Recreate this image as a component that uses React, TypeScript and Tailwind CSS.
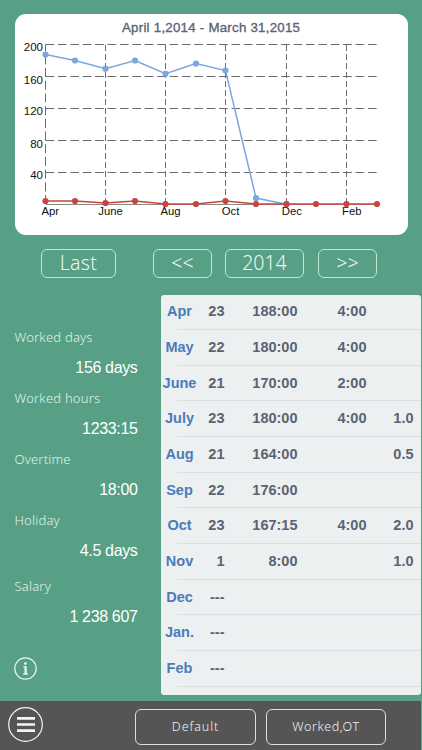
import type { ReactNode } from 'react';
import { clsx } from 'clsx';

interface MonthRow {
  month: string;
  days: string;
  hours?: string;
  overtime?: string;
  holiday?: string;
}

const MONTHS: MonthRow[] = [
  { month: 'Apr', days: '23', hours: '188:00', overtime: '4:00' },
  { month: 'May', days: '22', hours: '180:00', overtime: '4:00' },
  { month: 'June', days: '21', hours: '170:00', overtime: '2:00' },
  { month: 'July', days: '23', hours: '180:00', overtime: '4:00', holiday: '1.0' },
  { month: 'Aug', days: '21', hours: '164:00', holiday: '0.5' },
  { month: 'Sep', days: '22', hours: '176:00' },
  { month: 'Oct', days: '23', hours: '167:15', overtime: '4:00', holiday: '2.0' },
  { month: 'Nov', days: '1', hours: '8:00', holiday: '1.0' },
  { month: 'Dec', days: '---' },
  { month: 'Jan.', days: '---' },
  { month: 'Feb', days: '---' },
];

const SUMMARY = [
  { label: 'Worked days', value: '156 days', height: 'h-[61px]' },
  { label: 'Worked hours', value: '1233:15', height: 'h-[61px]' },
  { label: 'Overtime', value: '18:00', height: 'h-[61px]' },
  { label: 'Holiday', value: '4.5 days', height: 'h-[66px]' },
  { label: 'Salary', value: '1 238 607', height: 'h-[66px]' },
];

/* Chart geometry, in card coordinates. */
const POINT_X = [30.5, 60, 90.5, 120, 150.5, 181, 210.5, 241, 271.5, 301, 331.5, 362];
const WORKED_Y = [40.5, 46.5, 54.7, 46.5, 59.8, 49.6, 56.6, 184, 190.2];
const OVERTIME_Y = [187, 187, 189, 187, 190, 190, 187, 190, 190, 190, 190, 190];
const GRID_Y = [
  { y: 30.5, label: '200', textY: 36.5 },
  { y: 62.5, label: '160', textY: 69.5 },
  { y: 94.5, label: '120', textY: 101 },
  { y: 126.5, label: '80', textY: 133.5 },
  { y: 158.5, label: '40', textY: 165 },
];
const GRID_X = [
  { x: 30.5, label: 'Apr', textX: 35.3 },
  { x: 90.5, label: 'June', textX: 95.5 },
  { x: 150.5, label: 'Aug', textX: 155.5 },
  { x: 210.5, label: 'Oct', textX: 215.5 },
  { x: 271.5, label: 'Dec', textX: 276.8 },
  { x: 331.5, label: 'Feb', textX: 336.8 },
];

const toPoints = (ys: number[]) => ys.map((y, i) => `${POINT_X[i]},${y}`).join(' ');

function Series({ ys, color }: { ys: number[]; color: string }) {
  return (
    <g fill={color}>
      <polyline points={toPoints(ys)} fill="none" stroke={color} strokeWidth="1.5" />
      {ys.map((y, i) => (
        <circle key={i} cx={POINT_X[i]} cy={y} r="3.1" />
      ))}
    </g>
  );
}

function Chart() {
  return (
    <section className="mx-[14.5px] h-[221px] rounded-[11px] bg-white">
      <svg width="393" height="221" viewBox="0 0 393 221" className="block font-['Liberation_Sans',sans-serif]">
        <text x="196" y="18" textAnchor="middle" fontSize="13.3" fill="#5d6474" stroke="#5d6474" strokeWidth="0.35" textLength="178">
          April 1,2014 - March 31,2015
        </text>
        <g stroke="#6b6b6b" strokeWidth="1">
          {GRID_Y.map(({ y }) => (
            <line key={y} x1="30.5" x2="362" y1={y} y2={y} strokeDasharray="8.7 3.7" />
          ))}
          {GRID_X.map(({ x }, i) => (
            <line key={x} x1={x} x2={x} y1="190" y2="30.5" strokeDasharray={i === 0 ? '9 3.7' : '6 3'} />
          ))}
          <line x1="30.5" x2="362" y1="190.5" y2="190.5" stroke="#8d8a80" />
        </g>
        <Series ys={WORKED_Y} color="#7aa8dc" />
        <Series ys={OVERTIME_Y} color="#c8453f" />
        <g fontSize="11.5" fill="#111">
          {GRID_Y.map(({ label, textY }) => (
            <text key={label} x="28" y={textY} textAnchor="end">{label}</text>
          ))}
        </g>
        <g fontSize="11.3" fill="#111">
          {GRID_X.map(({ label, textX }) => (
            <text key={label} x={textX} y="201" textAnchor="middle">{label}</text>
          ))}
        </g>
      </svg>
    </section>
  );
}

function OutlineButton({ className, children }: { className?: string; children: ReactNode }) {
  return (
    <button
      type="button"
      className={clsx(
        "flex shrink-0 items-center justify-center border font-['Noto_Sans',sans-serif] font-light whitespace-nowrap",
        className,
      )}
    >
      {children}
    </button>
  );
}

function Summary() {
  return (
    <dl className="flex w-[161px] flex-col pt-[34px] pr-[23.5px] pl-[14.5px]">
      {SUMMARY.map(({ label, value, height }) => (
        <div key={label} className={clsx('shrink-0', height)}>
          <dt className="font-['Noto_Sans',sans-serif] text-[13px] leading-[16px] font-light tracking-[0.2px] text-[#e0f1ea]">
            {label}
          </dt>
          <dd className="mt-[14px] text-right text-base leading-[18px] tracking-[-0.35px] text-white">{value}</dd>
        </div>
      ))}
    </dl>
  );
}

function MonthTable() {
  return (
    <div className="h-[400px] w-[259.5px] overflow-hidden rounded-[3px] bg-[#ecf0f1] text-[14.5px] font-bold text-[#5b6373]">
      {MONTHS.map(({ month, days, hours, overtime, holiday }) => (
        <div key={month} className="flex h-[35.65px] flex-col">
          <div className="flex flex-1 items-center pt-px">
            <span className="w-[37px] shrink-0 text-center text-[#4a7db8]">{month}</span>
            <span className="w-[26.5px] shrink-0 text-right">{days}</span>
            <span className="w-[73px] shrink-0 text-right">{hours}</span>
            <span className="w-[69px] shrink-0 text-right">{overtime}</span>
            <span className="w-[47px] shrink-0 text-right">{holiday}</span>
          </div>
          <div className="ml-4 h-px bg-[#dcdfe2]" />
        </div>
      ))}
    </div>
  );
}

export default function App() {
  return (
    <main className="flex h-[750px] w-[422px] flex-col overflow-hidden bg-[#57a085] pt-[13.5px] font-['Liberation_Sans',sans-serif]">
      <Chart />

      <nav className="mt-[14px] flex h-[29px] pl-[41px] text-[19.5px] text-[#eaf8f2]">
        <OutlineButton className="w-[75px] rounded-[6px] border-[#c3e5d6] tracking-[0.3px]">Last</OutlineButton>
        <OutlineButton className="ml-[37px] w-[59px] rounded-[6px] border-[#c3e5d6]">&lt;&lt;</OutlineButton>
        <OutlineButton className="ml-[13px] w-[79px] rounded-[6px] border-[#c3e5d6]">2014</OutlineButton>
        <OutlineButton className="ml-[14px] w-[59px] rounded-[6px] border-[#c3e5d6]">&gt;&gt;</OutlineButton>
      </nav>

      <div className="mt-[17px] flex h-[406.5px]">
        <div className="flex flex-col">
          <Summary />
          <button type="button" aria-label="Info" className="mt-[13.5px] ml-[14px] size-[23px]">
            <svg viewBox="0 0 23 23" fill="none" stroke="#e8f5ef">
              <circle cx="11.5" cy="11.5" r="10.7" strokeWidth="1.2" />
              <circle cx="11.4" cy="6.6" r="1.4" fill="#e8f5ef" stroke="none" />
              <path d="M9.4 9.8h2.4v7M9.2 17h4.8" strokeWidth="1.3" />
              <path d="M11.5 9.5v7.5" strokeWidth="2" />
            </svg>
          </button>
        </div>
        <MonthTable />
      </div>

      <footer className="mr-px flex h-[49px] items-start bg-[#555] text-[12.5px] text-[#f2f2f2]">
        <button type="button" aria-label="Menu" className="mt-[6px] ml-2 size-[35px]">
          <svg viewBox="0 0 35 35" fill="none" stroke="#f4f4f4">
            <circle cx="17.5" cy="17.5" r="16.8" strokeWidth="1.2" />
            <path d="M9 11.4h18M9 17.5h18M9 23.6h18" strokeWidth="2.6" />
          </svg>
        </button>
        <OutlineButton className="mt-2 ml-[92px] h-9 w-[121px] rounded-[6px] border-[#dedede] tracking-[0.9px]">
          Default
        </OutlineButton>
        <OutlineButton className="mt-2 ml-[10px] h-9 w-[120px] rounded-[6px] border-[#dedede] tracking-[0.6px]">
          Worked,OT
        </OutlineButton>
      </footer>
    </main>
  );
}
